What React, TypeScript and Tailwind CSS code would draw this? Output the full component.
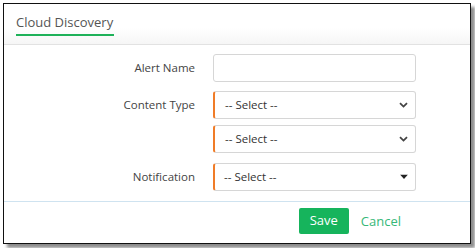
import React from 'react';

const font = "font-['Open_Sans','Noto_Sans',sans-serif]";

const Chevron: React.FC = () => (
  <svg width="9" height="6" viewBox="0 0 9 6" className="absolute right-[7px] top-1/2 -translate-y-1/2">
    <path d="M1 1.2 L4.5 4.6 L8 1.2" fill="none" stroke="#444" strokeWidth="1.8" />
  </svg>
);

const Caret: React.FC = () => (
  <svg width="8" height="5" viewBox="0 0 8 5" className="absolute right-[7px] top-1/2 -translate-y-1/2">
    <path d="M0 0 L8 0 L4 4.5 Z" fill="#222" />
  </svg>
);

const SelectBox: React.FC<{ caret?: boolean; className?: string }> = ({ caret = false, className = '' }) => (
  <div
    className={`relative w-[203px] h-[28px] border border-[#d6d6d6] border-l-2 border-l-[#f07c28] rounded-[3px] bg-white flex items-center ${caret ? 'pl-[9px]' : 'pl-[10px]'} ${className}`}
  >
    <span className="text-[11.5px] text-[#333]">-- Select --</span>
    {caret ? <Caret /> : <Chevron />}
  </div>
);

const Row: React.FC<{ label?: string; children: React.ReactNode; className?: string }> = ({ label, children, className = '' }) => (
  <div className={`flex items-center ${className}`}>
    <div className="w-[209px] text-right text-[11.5px] text-[#444] pr-[18px]">{label}</div>
    {children}
  </div>
);

export default function App() {
  return (
    <div className={`w-[475px] h-[248px] bg-white pt-[3px] pl-[3px] ${font}`}>
      <div className="w-[468px] h-[241px] border border-[#111] bg-white shadow-[4px_4px_3px_rgba(0,0,0,0.45)] flex flex-col">
        {/* header */}
        <div className="h-[41px] border-b border-[#e2e2e2] pl-[12px] pt-[5px] bg-gradient-to-b from-white from-60% to-[#f6f6f6]">
          <div className="inline-block text-[13px] leading-[18px] text-[#555] pb-[3px] border-b-2 border-[#1fb25a] pr-[1px]">
            Cloud Discovery
          </div>
        </div>

        {/* form */}
        <div className="flex-1 pt-[9px]">
          <Row label="Alert Name">
            <div className="w-[203px] h-[28px] border border-[#d6d6d6] rounded-[3px] bg-white" />
          </Row>
          <Row label="Content Type" className="mt-[9px]">
            <SelectBox />
          </Row>
          <Row className="mt-[6px]">
            <SelectBox />
          </Row>
          <Row label="Notification" className="mt-[10px]">
            <SelectBox caret />
          </Row>
        </div>

        {/* footer */}
        <div className="h-[42px] border-t border-[#cfe3f0] flex items-start justify-end pr-[69px] pt-[6px] gap-[12px]">
          <button className="w-[50px] h-[26px] bg-[#16b45c] text-white text-[13px] rounded-[2px]">Save</button>
          <span className="text-[13px] text-[#36b878] leading-[26px]">Cancel</span>
        </div>
      </div>
    </div>
  );
}
